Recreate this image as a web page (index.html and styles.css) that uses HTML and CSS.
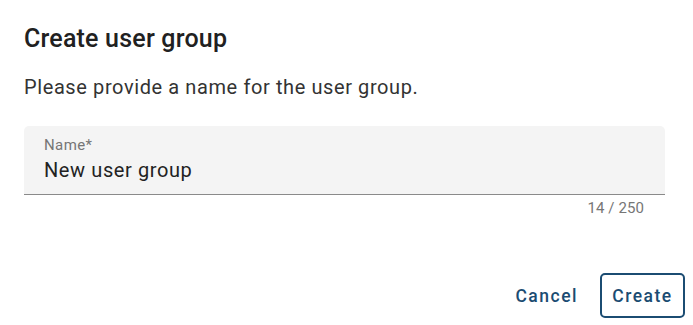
FILE: index.html
```html
<!DOCTYPE html>
<html lang="en">
<head>
  <meta charset="UTF-8">
  <meta name="viewport" content="width=device-width, initial-scale=1.0">
  <title>Create user group</title>
  <link rel="stylesheet" href="styles.css">
</head>
<body>
  <div class="dialog">
    <h2 class="dialog-title">Create user group</h2>
    <p class="dialog-text">Please provide a name for the user group.</p>

    <div class="field">
      <div class="field-box">
        <label class="field-label" for="name">Name*</label>
        <input class="field-input" id="name" type="text" value="New user group" maxlength="250">
      </div>
      <div class="field-hint">14 / 250</div>
    </div>

    <div class="dialog-actions">
      <button class="btn btn-text">Cancel</button>
      <button class="btn btn-outline">Create</button>
    </div>
  </div>
</body>
</html>
```

FILE: styles.css
```css
body {
  margin: 0;
  padding: 0;
  background-color: #fff;
  font-family: Roboto, "Liberation Sans", sans-serif;
  color: #212121;
}
.dialog {
  width: 693px;
  height: 325px;
  box-sizing: border-box;
  padding: 23px 8px 0 24px;
}
.dialog-title {
  margin: 0;
  font-size: 25px;
  font-weight: 500;
  line-height: 32px;
  letter-spacing: 0.2px;
  color: #212121;
}
.dialog-text {
  margin: 20px 0 0;
  font-size: 20px;
  line-height: 24px;
  letter-spacing: 0.6px;
  color: #333;
}
.field {
  margin-top: 27px;
  width: 641px;
}
.field-box {
  background-color: #f4f4f4;
  border-radius: 5px 5px 0 0;
  border-bottom: 1px solid #8a8a8a;
  height: 69px;
  box-sizing: border-box;
  padding: 10px 20px 0 20px;
  display: flex;
  flex-direction: column;
}
.field-label {
  font-size: 15px;
  line-height: 18px;
  color: #767676;
  letter-spacing: 0.4px;
}
.field-input {
  border: none;
  outline: none;
  background: transparent;
  padding: 0;
  margin-top: 4px;
  height: 24px;
  font-family: inherit;
  font-size: 20px;
  line-height: 24px;
  letter-spacing: 0.6px;
  color: #222;
}
.field-hint {
  text-align: right;
  padding-right: 21px;
  margin-top: 5px;
  font-size: 15px;
  line-height: 16px;
  color: #767676;
  letter-spacing: 0.1px;
}
.dialog-actions {
  display: flex;
  justify-content: flex-end;
  align-items: center;
  gap: 12px;
  margin-top: 57px;
}
.btn {
  font-family: inherit;
  font-size: 17.5px;
  font-weight: 500;
  letter-spacing: 1.5px;
  color: #1b4c72;
  background: transparent;
  height: 45px;
  border-radius: 5px;
  cursor: pointer;
}
.btn-text {
  border: none;
  padding: 0 10px;
}
.btn-outline {
  border: 2px solid #1b4c72;
  padding: 0 10px;
  width: 85px;
}
```
